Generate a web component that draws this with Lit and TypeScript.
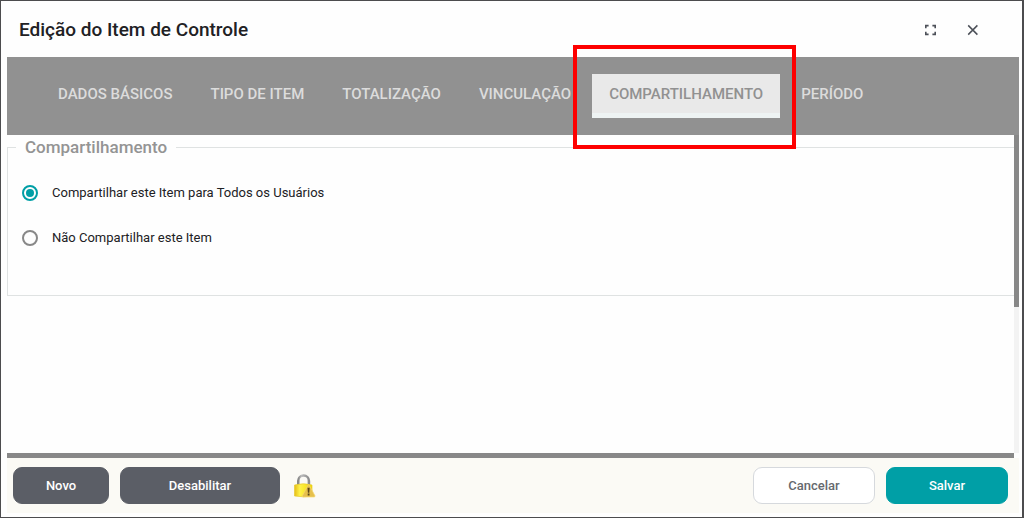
import { LitElement, html, css } from "lit";
import { customElement, state } from "lit/decorators.js";
import { classMap } from "lit/directives/class-map.js";

const TABS = ["Dados Básicos", "Tipo de Item", "Totalização", "Vinculação", "Compartilhamento", "Período"];

@customElement("app-root")
export class AppRoot extends LitElement {
  @state() private active = 4;

  static styles = css`
    :host {
      display: block;
      font-family: Roboto, "Liberation Sans", sans-serif;
      color: #212124;
    }
    * { box-sizing: border-box; }
    button { font: inherit; cursor: pointer; }
    .dialog {
      display: flex;
      flex-direction: column;
      min-height: 100vh;
      border: 1px solid #4c4c4e;
      border-right-width: 2px;
      background: #fefefe;
      padding: 0 3px 4px 6px;
    }
    .header {
      display: flex;
      align-items: center;
      gap: 24px;
      height: 56px;
      padding: 2px 37px 0 12px;
    }
    .title {
      flex: 1;
      margin: 0;
      font-size: 19px;
      line-height: 24px;
      font-weight: 500;
    }
    .icon-button {
      display: flex;
      padding: 0;
      border: 0;
      background: none;
      color: #4c5058;
    }
    .tabs {
      display: flex;
      align-items: center;
      gap: 4px;
      height: 78px;
      padding: 0 34px;
      background: #919191;
    }
    .tab {
      position: relative;
      height: 44px;
      padding: 0 17px 5px;
      border: 0;
      background: none;
      color: #dcdcdc;
      font-size: 15px;
      line-height: 18px;
      font-weight: 500;
      text-transform: uppercase;
      white-space: nowrap;
    }
    .tab.active {
      background: #e9e9e9;
      box-shadow: inset 0 -5px #eef3f3;
      color: #919191;
    }
    .tab.active::after {
      content: "";
      position: absolute;
      inset: -29px -16px -31px -19px;
      border: 4px solid #fe0000;
      pointer-events: none;
    }
    .body {
      display: flex;
      flex: 1;
    }
    .content {
      flex: 1;
      border-bottom: 5px solid #888;
    }
    .track {
      width: 5px;
      margin-bottom: 5px;
      background: #f3f3f3;
    }
    .thumb {
      height: 54%;
      background: #888;
    }
    .group {
      display: flex;
      flex-direction: column;
      gap: 21px;
      margin: 0;
      padding: 22px 14px 45px;
      border: 1px solid #dfe2e2;
      border-right: 0;
    }
    .legend {
      margin-left: -6px;
      padding: 0 9px;
      font-size: 17px;
      line-height: 24px;
      font-weight: 500;
      color: #949494;
    }
    .option {
      display: flex;
      align-items: center;
      gap: 14px;
      font-size: 13px;
      line-height: 24px;
    }
    .radio {
      appearance: none;
      width: 16px;
      height: 16px;
      margin: 0;
      padding: 2px;
      border: 2px solid #888;
      border-radius: 50%;
    }
    .radio:checked {
      border-color: #009fa6;
      background: #009fa6 content-box;
    }
    .footer {
      display: flex;
      align-items: center;
      gap: 11px;
      height: 55px;
      padding: 0 11px 0 6px;
      background: #fbfaf5;
    }
    .button {
      height: 37px;
      border: 1px solid #5b5e66;
      border-radius: 9px;
      background: #5b5e66;
      color: #fff;
      font-size: 13px;
      font-weight: 500;
    }
    .small { width: 96px; }
    .large { width: 160px; }
    .medium { width: 122px; }
    .plain {
      margin-left: auto;
      border-color: #d6d9dd;
      background: #fff;
      color: #66696e;
    }
    .primary {
      border-color: #009fa6;
      background: #009fa6;
    }
    .lock { margin-left: 2px; }
  `;

  render() {
    return html`
      <section class="dialog" role="dialog" aria-labelledby="title">
        <header class="header">
          <h1 class="title" id="title">Edição do Item de Controle</h1>
          <button class="icon-button" aria-label="Maximizar">
            <svg width="18" height="18" viewBox="0 0 18 18" fill="none" stroke="currentColor" stroke-width="1.6">
              <path d="M3.800 7.200V4.600H6.600M10.400 4.600h2.800V7.200M13.200 10.800v2.600H10.400M6.600 13.400H3.800V10.800" />
            </svg>
          </button>
          <button class="icon-button" aria-label="Fechar">
            <svg width="18" height="18" viewBox="0 0 18 18" fill="none" stroke="currentColor" stroke-width="1.5">
              <path d="M4.200 4.400l9.200 9.200M13.400 4.400l-9.200 9.200" />
            </svg>
          </button>
        </header>
        <nav class="tabs" role="tablist">
          ${TABS.map(
            (label, i) => html`<button
              class=${classMap({ tab: true, active: i === this.active })}
              role="tab"
              aria-selected=${i === this.active ? "true" : "false"}
              @click=${() => (this.active = i)}
            >${label}</button>`
          )}
        </nav>
        <div class="body">
          <div class="content">
            <fieldset class="group">
              <legend class="legend">Compartilhamento</legend>
              <label class="option"><input class="radio" type="radio" name="share" checked />Compartilhar este Item para Todos os Usuários</label>
              <label class="option"><input class="radio" type="radio" name="share" />Não Compartilhar este Item</label>
            </fieldset>
          </div>
          <div class="track"><div class="thumb"></div></div>
        </div>
        <footer class="footer">
          <button class="button small">Novo</button>
          <button class="button large">Desabilitar</button>
          <svg class="lock" width="24" height="26" viewBox="0 0 24 26" aria-hidden="true">
            <defs>
              <linearGradient id="gold" x1="0" x2="1">
                <stop offset="0" stop-color="#e5bd16" />
                <stop offset=".3" stop-color="#fff24a" />
                <stop offset="1" stop-color="#f1d900" />
              </linearGradient>
              <linearGradient id="steel" x1="0" x2="1">
                <stop offset="0" stop-color="#888" />
                <stop offset=".3" stop-color="#bcbcbc" />
                <stop offset="1" stop-color="#8c8c8c" />
              </linearGradient>
            </defs>
            <path d="M5.300 13V7.800a5.300 5.300 0 0 1 10.600 0V13" fill="none" stroke="url(#steel)" stroke-width="2.6" />
            <path d="M1.500 12q9-2.500 17.500 0v11q-8.500 1.600-17.500 0z" fill="url(#gold)" stroke="#e6ca32" stroke-width=".7" />
            <path d="M14.900 12.300q.7-1 1.400 0l5.700 10.500q.3 1.200-1 1.200H10.200q-1.300 0-.8-1.200z" fill="#e6c04c" stroke="#f5d873" stroke-width=".7" />
            <path d="M14.500 14.800h2.200l-.4 5h-1.400zM14.700 20.600h1.800v1.800h-1.800z" fill="#5a4618" />
          </svg>
          <button class="button medium plain">Cancelar</button>
          <button class="button medium primary">Salvar</button>
        </footer>
      </section>
    `;
  }
}
